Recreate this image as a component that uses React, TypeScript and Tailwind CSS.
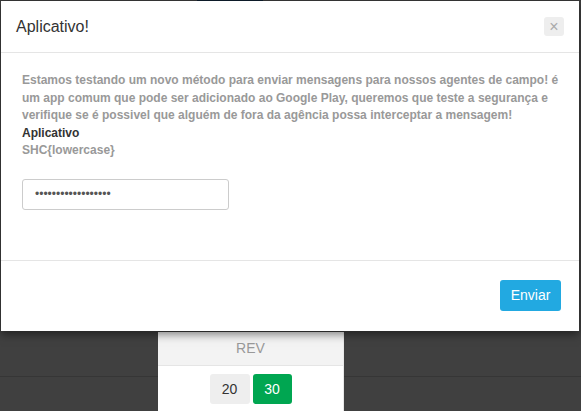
import { useState } from 'react';

const SenhaModal = () => {
  const [senha, setSenha] = useState('xxxxxxxxxxxxxxxxxx');

  return (
    <div className="absolute left-[1px] top-[1px] flex h-[330px] w-[578px] flex-col bg-white shadow-[0_3px_9px_rgba(0,0,0,0.5)]">
      <div className="flex h-[52px] items-center justify-between border-b border-[#e5e5e5] pl-[15px] pr-[15px]">
        <h4 className="text-[16px] text-[#333]">Aplicativo!</h4>
        <button className="flex h-[19px] w-[20px] items-center justify-center rounded-[3px] bg-[#eeeeee] text-[16px] leading-none text-[#aaa]">
          ×
        </button>
      </div>

      <div className="flex-1 border-b border-[#e5e5e5] pl-[21px] pr-[20px] pt-[19px]">
        <p className="text-[12px] font-bold leading-[17.5px] text-[#999]">
          Estamos testando um novo método para enviar mensagens para nossos agentes de campo! é um app comum que pode ser adicionado ao Google Play, queremos que teste a segurança e verifique se é possivel que alguém de fora da agência possa interceptar a mensagem!
          <br />
          <span className="text-[#333]">Aplicativo</span>
          <br />
          SHC{'{lowercase}'}
        </p>
        <input
          type="password"
          value={senha}
          onChange={(e) => setSenha(e.target.value)}
          className="mt-[19px] h-[31px] w-[207px] rounded-[3px] border border-[#ccc] px-[12px] text-[12px] text-[#555] outline-none"
        />
      </div>

      <div className="flex h-[70px] items-start justify-end pr-[18px] pt-[19px]">
        <button className="h-[31px] w-[61px] rounded-[3px] bg-[#22a9e1] text-[14px] text-white">
          Enviar
        </button>
      </div>
    </div>
  );
};

export default function App() {
  return (
    <div className="relative h-[411px] w-[581px] overflow-hidden bg-[#404040] font-['Liberation_Sans',Arial,sans-serif]">
      <div className="flex h-[1px] w-full">
        <div className="w-[197px] bg-[#3a3a3a]" />
        <div className="w-[66px] bg-[#0e1e2e]" />
        <div className="flex-1 bg-[#3a3a3a]" />
      </div>

      <div className="mt-[331px] flex">
        <div className="flex w-[158px] flex-col">
          <div className="h-[44px]" />
          <div className="h-[1px] bg-[#363636]" />
        </div>
        <div className="flex h-[79px] w-[186px] flex-col border-r border-[#e8e8e8] bg-white">
          <div className="flex h-[34px] items-center justify-center border-b border-[#e5e5e5] bg-[#f3f3f3] text-[14px] text-[#999]">
            REV
          </div>
          <div className="flex justify-center gap-[3px] pt-[8px]">
            <button className="h-[30px] w-[40px] rounded-[3px] bg-[#eeeeee] text-[14px] text-[#333]">20</button>
            <button className="h-[30px] w-[39px] rounded-[3px] bg-[#00a651] text-[14px] text-white">30</button>
          </div>
        </div>
        <div className="flex flex-1 flex-col">
          <div className="h-[44px]" />
          <div className="h-[1px] bg-[#363636]" />
        </div>
      </div>

      <SenhaModal />
    </div>
  );
}
